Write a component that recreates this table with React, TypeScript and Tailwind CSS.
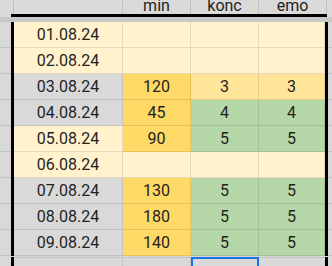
import React from "react";

type Row = {
  date: string;
  dateBg: string;
  min: string;
  minBg: string;
  konc: string;
  emo: string;
  scoreBg: string;
};

const rows: Row[] = [
  { date: "01.08.24", dateBg: "bg-[#fff2cc]", min: "", minBg: "bg-[#fff2cc]", konc: "", emo: "", scoreBg: "bg-[#fff2cc]" },
  { date: "02.08.24", dateBg: "bg-[#fff2cc]", min: "", minBg: "bg-[#fff2cc]", konc: "", emo: "", scoreBg: "bg-[#fff2cc]" },
  { date: "03.08.24", dateBg: "bg-[#d9d9d9]", min: "120", minBg: "bg-[#ffd966]", konc: "3", emo: "3", scoreBg: "bg-[#ffe599]" },
  { date: "04.08.24", dateBg: "bg-[#d9d9d9]", min: "45", minBg: "bg-[#ffd966]", konc: "4", emo: "4", scoreBg: "bg-[#b6d7a8]" },
  { date: "05.08.24", dateBg: "bg-[#fff2cc]", min: "90", minBg: "bg-[#ffd966]", konc: "5", emo: "5", scoreBg: "bg-[#b6d7a8]" },
  { date: "06.08.24", dateBg: "bg-[#fff2cc]", min: "", minBg: "bg-[#fff2cc]", konc: "", emo: "", scoreBg: "bg-[#fff2cc]" },
  { date: "07.08.24", dateBg: "bg-[#d9d9d9]", min: "130", minBg: "bg-[#ffd966]", konc: "5", emo: "5", scoreBg: "bg-[#b6d7a8]" },
  { date: "08.08.24", dateBg: "bg-[#d9d9d9]", min: "180", minBg: "bg-[#ffd966]", konc: "5", emo: "5", scoreBg: "bg-[#b6d7a8]" },
  { date: "09.08.24", dateBg: "bg-[#d9d9d9]", min: "140", minBg: "bg-[#ffd966]", konc: "5", emo: "5", scoreBg: "bg-[#b6d7a8]" },
];

function Cell({ w, bg, children }: { w: string; bg: string; children?: React.ReactNode }) {
  return (
    <div className={`${w} ${bg} h-full flex items-center justify-center border-r border-b border-black/10`}>
      {children}
    </div>
  );
}

export default function App() {
  return (
    <div
      className="w-[332px] h-[266px] overflow-hidden bg-[#d9d9d9] text-[16px] text-[#1f1f1f]"
      style={{ fontFamily: "Roboto, 'Liberation Sans', sans-serif" }}
    >
      {/* column header, cut at top */}
      <div className="flex h-[14px] bg-[#dadada] overflow-hidden">
        <div className="w-[14px] h-full border-r border-[#c2c2c2]" />
        <div className="w-[109px] h-full border-r border-[#c2c2c2]" />
        <div className="w-[68px] h-full border-r border-[#c2c2c2] flex items-end justify-center leading-[16px]">min</div>
        <div className="w-[68px] h-full border-r border-[#c2c2c2] flex items-end justify-center leading-[16px]">konc</div>
        <div className="w-[68px] h-full border-r border-[#c2c2c2] flex items-end justify-center leading-[16px]">emo</div>
        <div className="flex-1 h-full" />
      </div>
      <div className="flex h-[3px]">
        <div className="w-[11px] bg-[#dadada]" />
        <div className="w-[316px] bg-black" />
        <div className="flex-1 bg-[#dadada]" />
      </div>
      <div className="h-[5px] bg-[#c8c8c8]" />

      {rows.map((r) => (
        <div key={r.date} className="flex h-[26px]">
          <div className="w-[11px] h-full border-b border-[#c4c4c4]" />
          <div className="w-[3px] h-full bg-black" />
          <Cell w="w-[109px]" bg={r.dateBg}>{r.date}</Cell>
          <Cell w="w-[68px]" bg={r.minBg}>{r.min}</Cell>
          <Cell w="w-[68px]" bg={r.scoreBg}>{r.konc}</Cell>
          <Cell w="w-[66px]" bg={r.scoreBg}>{r.emo}</Cell>
          <div className="w-[3px] h-full bg-black" />
          <div className="flex-1 h-full border-b border-[#c4c4c4]" />
        </div>
      ))}

      {/* next empty row with selection */}
      <div className="flex h-[12px] mt-[1px]">
        <div className="w-[11px] h-full" />
        <div className="w-[3px] h-full bg-black" />
        <div className="w-[109px] h-full border-r border-t border-[#c4c4c4]" />
        <div className="w-[68px] h-full border-r border-t border-[#c4c4c4]" />
        <div className="w-[68px] h-full border-2 border-[#1a73e8]" />
        <div className="w-[66px] h-full border-t border-[#c4c4c4]" />
        <div className="w-[3px] h-full bg-black" />
        <div className="flex-1 h-full" />
      </div>
    </div>
  );
}
